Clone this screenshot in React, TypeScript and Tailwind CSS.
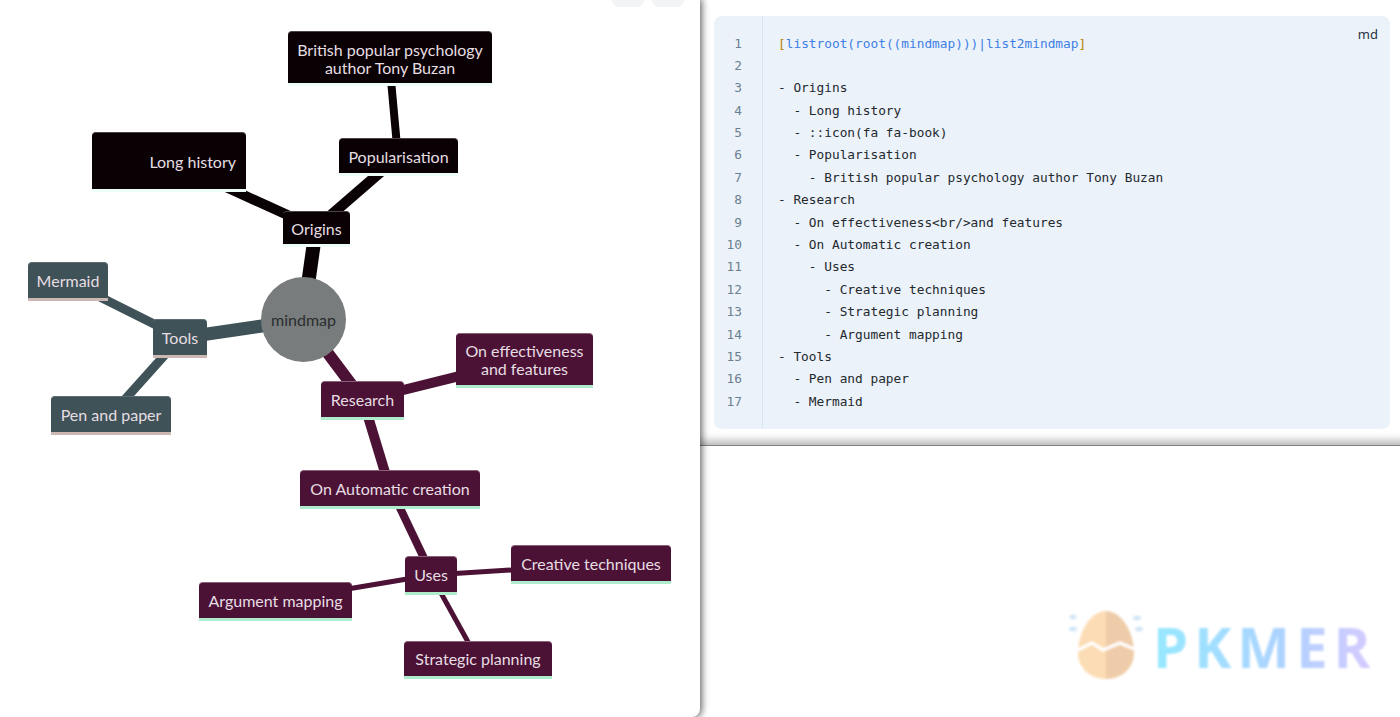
const MONO = "font-['DejaVu_Sans_Mono','Liberation_Mono',monospace]";

type Tone = "black" | "slate" | "plum";
const toneClass: Record<Tone, string> = {
  black: "bg-[#0a0104] border-b-[#eefdf7] border-t-[#4a4245] pt-[2px]",
  slate: "bg-[#3f5258] border-b-[#cdb7b2] border-t-[#5d6d72]",
  plum: "bg-[#4c1236] border-b-[#aeeccd] border-t-[#8a5f78]",
};

const nodes: { t: string; x: number; y: number; w: number; h: number; tone: Tone; right?: boolean }[] = [
  { t: "British popular psychology\nauthor Tony Buzan", x: 288, y: 31, w: 204, h: 55, tone: "black" },
  { t: "Long history", x: 92, y: 132, w: 154, h: 60, tone: "black", right: true },
  { t: "Popularisation", x: 339, y: 138, w: 119, h: 38, tone: "black" },
  { t: "Origins", x: 283, y: 211, w: 67, h: 36, tone: "black" },
  { t: "Tools", x: 153, y: 319, w: 54, h: 39, tone: "slate" },
  { t: "Mermaid", x: 28, y: 262, w: 80, h: 39, tone: "slate" },
  { t: "Pen and paper", x: 51, y: 396, w: 120, h: 39, tone: "slate" },
  { t: "Research", x: 321, y: 381, w: 83, h: 39, tone: "plum" },
  { t: "On effectiveness\nand features", x: 456, y: 333, w: 137, h: 55, tone: "plum" },
  { t: "On Automatic creation", x: 300, y: 470, w: 180, h: 39, tone: "plum" },
  { t: "Uses", x: 405, y: 556, w: 52, h: 39, tone: "plum" },
  { t: "Creative techniques", x: 511, y: 545, w: 160, h: 39, tone: "plum" },
  { t: "Argument mapping", x: 199, y: 582, w: 153, h: 39, tone: "plum" },
  { t: "Strategic planning", x: 404, y: 641, w: 148, h: 38, tone: "plum" },
];

const edges: [number, number, number, number, number, string][] = [
  [303, 320, 316, 228, 14, "#0a0104"],
  [316, 228, 169, 161, 10, "#0a0104"],
  [316, 228, 398, 157, 10.5, "#0a0104"],
  [398, 157, 389, 58, 8, "#0a0104"],
  [303, 320, 180, 338, 13, "#3f5258"],
  [180, 337, 68, 281, 9, "#3f5258"],
  [180, 338, 111, 415, 9, "#3f5258"],
  [303, 320, 363, 400, 12, "#4c1236"],
  [363, 400, 524, 360, 10, "#4c1236"],
  [363, 400, 390, 489, 10, "#4c1236"],
  [391, 489, 432, 575, 8, "#4c1236"],
  [431, 575, 591, 565, 5, "#4c1236"],
  [431, 575, 276, 601, 5, "#4c1236"],
  [431, 575, 478, 660, 5, "#4c1236"],
];

const code = [
  "",
  "",
  "- Origins",
  "  - Long history",
  "  - ::icon(fa fa-book)",
  "  - Popularisation",
  "    - British popular psychology author Tony Buzan",
  "- Research",
  "  - On effectiveness<br/>and features",
  "  - On Automatic creation",
  "    - Uses",
  "      - Creative techniques",
  "      - Strategic planning",
  "      - Argument mapping",
  "- Tools",
  "  - Pen and paper",
  "  - Mermaid",
];

function MindMap() {
  return (
    <div className="relative z-10 h-full w-[700px] shrink-0 rounded-br-lg bg-white shadow-[1px_0_7px_1px_rgba(0,0,0,0.6)]">
      <div className="absolute left-[612px] top-0 h-[7px] w-8 rounded-b-lg bg-[#f3f4f6]" />
      <div className="absolute left-[652px] top-0 h-[7px] w-8 rounded-b-lg bg-[#f3f4f6]" />
      <svg className="absolute left-0 top-0" width="700" height="717">
        {edges.map(([a, b, c, d, w, col], i) => (
          <line key={i} x1={a} y1={b} x2={c} y2={d} stroke={col} strokeWidth={w} />
        ))}
      </svg>
      {nodes.map((n) => (
        <div
          key={n.t}
          style={{ left: n.x, top: n.y, width: n.w, height: n.h }}
          className={`absolute flex items-center whitespace-pre rounded-t-[4px] border-t border-b-[3px] px-[10px] text-[16px] leading-[18px] text-[#e6dee2] font-['Lato','Open_Sans',sans-serif] ${
            n.right ? "justify-end text-right" : "justify-center text-center"
          } ${toneClass[n.tone]}`}
        >
          {n.t}
        </div>
      ))}
      <div className="absolute left-[261px] top-[277px] flex h-[85px] w-[85px] items-center justify-center rounded-full bg-[#787c7c] text-[16px] text-[#2b2e30] font-['Lato','Open_Sans',sans-serif]">
        mindmap
      </div>
    </div>
  );
}

function CodePanel() {
  return (
    <div className="h-[446px] border-b border-[#808080] pl-[14px] pr-[10px] pt-4 pb-4 shadow-[inset_0_-13px_10px_-9px_rgba(0,0,0,0.3)]">
      <div className={`relative flex h-[413px] rounded-lg bg-[#ebf2f9] text-[12.8px] leading-[22.4px] ${MONO}`}>
        <div className="flex w-[49px] shrink-0 flex-col items-end border-r border-[#d4e6f4] pt-[16.5px] pr-[20px] text-[#6c7f90]">
          {code.map((_, i) => (
            <span key={i} className="h-[22.4px]">{i + 1}</span>
          ))}
        </div>
        <div className="flex flex-col pt-[16.5px] pl-[15px] text-[#24292f]">
          <div className="h-[22.4px] whitespace-pre text-[#3f7fe6]">
            <span className="text-[#b97f00]">[</span>listroot(root((mindmap)))|list2mindmap<span className="text-[#b97f00]">]</span>
          </div>
          {code.slice(1).map((l, i) => (
            <div key={i} className="h-[22.4px] whitespace-pre">{l}</div>
          ))}
        </div>
        <span className="absolute right-[12px] top-[7px] text-[13px] text-[#2a3346] font-['Noto_Sans',sans-serif]">md</span>
      </div>
    </div>
  );
}

function Logo() {
  return (
    <div className="absolute left-[1066px] top-[606px] z-20 flex h-[78px] w-[310px] items-center opacity-90 blur-[1px]">
      <svg width="80" height="78" viewBox="0 0 80 78" className="shrink-0">
        <ellipse cx="7" cy="11" rx="3.5" ry="2.5" fill="#cfe4f6" />
        <ellipse cx="7" cy="23" rx="4" ry="2.5" fill="#cfe4f6" />
        <ellipse cx="71" cy="12" rx="4" ry="2.5" fill="#cfe4f6" />
        <ellipse cx="73" cy="23" rx="4" ry="2.5" fill="#cfe4f6" />
        <path d="M40 5C24 5 12 27 12 47c0 15 12 26 28 26z" fill="#fcd9ac" />
        <path d="M40 5c16 0 28 22 28 42 0 15-12 26-28 26z" fill="#eec7a0" />
        <path d="M10 45l16-8 11 7 17-7 14 6" fill="none" stroke="#ffffff" strokeWidth="3.5" />
      </svg>
      <span className="ml-[7px] mt-[2px] bg-[linear-gradient(90deg,#8be6ff,#a3d0ff_55%,#d3c4ff)] bg-clip-text text-[56px] font-bold leading-none tracking-[6px] text-transparent font-['Open_Sans',sans-serif]">
        PKMER
      </span>
    </div>
  );
}

export default function App() {
  return (
    <div className="relative flex h-[717px] w-[1400px] overflow-hidden bg-white">
      <MindMap />
      <div className="relative flex-1">
        <CodePanel />
      </div>
      <Logo />
    </div>
  );
}
